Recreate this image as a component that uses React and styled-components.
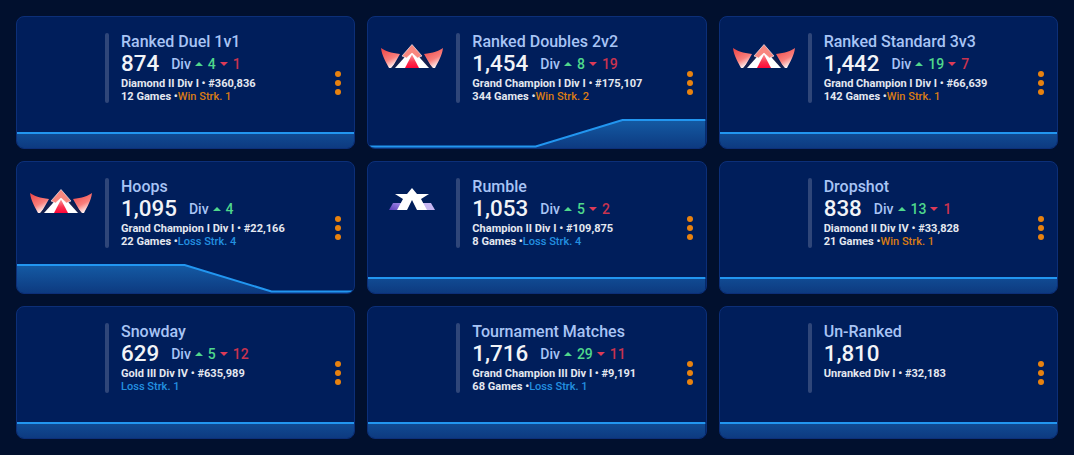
import React from "react";
import styled, { createGlobalStyle } from "styled-components";

const Global = createGlobalStyle`
  html, body { margin: 0; padding: 0; }
  body { background: #01102e; font-family: Roboto, "Liberation Sans", sans-serif; }
`;
const Page = styled.div`
  width: 1074px; height: 455px; box-sizing: border-box; overflow: hidden;
  padding: 16px 16px 0;
  background: #01102e;
  display: grid; grid-template-columns: repeat(3, 1fr); grid-auto-rows: 133px;
  column-gap: 12px; row-gap: 12px;
`;
const Card = styled.div`
  position: relative; box-sizing: border-box; overflow: hidden;
  background: #001e5b; border: 1px solid #0c2f78; border-radius: 8px;
  display: flex; align-items: flex-start;
  padding: 16px 0 0 88px;
`;
const Rank = styled.div`
  position: absolute; left: 9px; top: 24px; width: 70px; height: 30px;
`;
const Divider = styled.div`
  width: 4px; height: 70px; border-radius: 2px; background: #2f4679; flex: none;
`;
const Info = styled.div`
  margin-left: 12px; display: flex; flex-direction: column; flex: 1;
`;
const Title = styled.div`
  font-size: 16px; font-weight: 500; line-height: 18px; color: #a8c4f5;
`;
const StatRow = styled.div`
  display: flex; align-items: center; height: 28px; margin-top: -2px;
`;
const Mmr = styled.div`
  font-size: 22.4px; font-weight: 500; line-height: 28px; color: #f1f3f7;
`;
const Div = styled.span`
  font-size: 14px; font-weight: 500; color: #a8c4f5; margin-left: 12px; position: relative; top: 1px;
`;
const Arrow = styled.span`
  width: 0; height: 0; margin-left: 4px; margin-right: 5px; position: relative; top: 1px;
  border-left: 4px solid transparent; border-right: 4px solid transparent;
  ${p => p.$up ? "border-bottom: 4px solid #4fd88c;" : "border-top: 4px solid #dd3a57;"}
`;
const Delta = styled.span`
  font-size: 14px; font-weight: 500; position: relative; top: 1px;
  color: ${p => p.$up ? "#4fd88c" : "#c9334f"};
`;
const Sub = styled.div`
  font-size: 11.05px; font-weight: 700; line-height: 13px; color: #e4e8f0; white-space: pre;
`;
const Streak = styled.span`
  font-weight: 500; color: ${p => p.$win ? "#d97c14" : "#2390e0"};
`;
const Menu = styled.div`
  position: absolute; right: 13px; top: 54px;
  display: flex; flex-direction: column; gap: 3px;
`;
const Dot = styled.span`
  width: 6px; height: 6px; border-radius: 50%; background: #e8820f;
`;
const ChartSvg = styled.svg`
  position: absolute; left: 0; bottom: 0; width: 100%; height: 131px; display: block;
`;

const GC = ({ id }) => (
  <svg viewBox="0 0 70 30" width="70" height="30">
    <defs>
      <linearGradient id={`wing${id}`} x1="0.1" y1="0" x2="0.6" y2="1">
        <stop offset="0" stopColor="#ee4545" />
        <stop offset="0.6" stopColor="#f97f7c" />
        <stop offset="1" stopColor="#ffffff" />
      </linearGradient>
      <linearGradient id={`gem${id}`} x1="0" y1="0" x2="0" y2="1">
        <stop offset="0" stopColor="#fb9a98" />
        <stop offset="0.55" stopColor="#f8324f" />
        <stop offset="1" stopColor="#ff0638" />
      </linearGradient>
    </defs>
    <path d="M4 7 C8 10 14 12 23 13 L15 27 H12 C9 21 5 15 4 7Z" fill={`url(#wing${id})`} />
    <path d="M66 7 C62 10 56 12 47 13 L55 27 H58 C61 21 65 15 66 7Z" fill={`url(#wing${id})`} />
    <path d="M35 4 L56 27 H14Z" fill="#14204e" />
    <path d="M35 8 L52 27 H18Z" fill="#fff" />
    <path d="M35 3.5 L45 15 L40.5 17 L35 12 L29.5 17 L25 15Z" fill="#f8877f" stroke="#fff" strokeWidth="0.6" />
    <path d="M35 13.5 L42 27 H28Z" fill={`url(#gem${id})`} />
  </svg>
);

const Champ = ({ id }) => (
  <svg viewBox="0 0 70 30" width="70" height="30">
    <defs>
      <linearGradient id={`purp${id}`} x1="0" y1="1" x2="1" y2="0">
        <stop offset="0" stopColor="#5b3fb8" />
        <stop offset="1" stopColor="#a88fec" />
      </linearGradient>
    </defs>
    <path d="M12 24 L16 17 H26 L21 24Z" fill={`url(#purp${id})`} />
    <path d="M44 17 H54 L58 24 H49Z" fill="#c6b6f2" />
    <path d="M35 2 L40 8 H52 L44 13 L50 24 H40 L35 14 L30 24 H20 L26 13 L18 8 H30Z" fill="#fff" />
  </svg>
);

const flat = { line: "M0 116 H338", area: "M0 116 H338 V131 H0Z" };
const up = { line: "M0 129.5 H168 L255 103 H338", area: "M0 129.5 H168 L255 103 H338 V131 H0Z" };
const down = { line: "M0 103 H168 L255 129.5 H338", area: "M0 103 H168 L255 129.5 H338 V131 H0Z" };

const Chart = ({ d, id }) => (
  <ChartSvg viewBox="0 0 338 131" preserveAspectRatio="none">
    <defs>
      <linearGradient id={id} x1="0" y1="100" x2="0" y2="131" gradientUnits="userSpaceOnUse">
        <stop offset="0" stopColor="#155ea8" />
        <stop offset="1" stopColor="#0d3a80" />
      </linearGradient>
    </defs>
    <path d={d.area} fill={`url(#${id})`} />
    <path d={d.line} fill="none" stroke="#2296f0" strokeWidth="2" />
  </ChartSvg>
);

const cards = [
  { t: "Ranked Duel 1v1", m: "874", u: 4, dn: 1, s: "Diamond II Div I • #360,836", g: "12 Games •", k: "Win Strk. 1", w: true, c: flat },
  { t: "Ranked Doubles 2v2", m: "1,454", u: 8, dn: 19, s: "Grand Champion I Div I • #175,107", g: "344 Games •", k: "Win Strk. 2", w: true, c: up, r: "gc" },
  { t: "Ranked Standard 3v3", m: "1,442", u: 19, dn: 7, s: "Grand Champion I Div I • #66,639", g: "142 Games •", k: "Win Strk. 1", w: true, c: flat, r: "gc" },
  { t: "Hoops", m: "1,095", u: 4, s: "Grand Champion I Div I • #22,166", g: "22 Games •", k: "Loss Strk. 4", c: down, r: "gc" },
  { t: "Rumble", m: "1,053", u: 5, dn: 2, s: "Champion II Div I • #109,875", g: "8 Games •", k: "Loss Strk. 4", c: flat, r: "ch" },
  { t: "Dropshot", m: "838", u: 13, dn: 1, s: "Diamond II Div IV • #33,828", g: "21 Games •", k: "Win Strk. 1", w: true, c: flat },
  { t: "Snowday", m: "629", u: 5, dn: 12, s: "Gold III Div IV • #635,989", g: "", k: "Loss Strk. 1", c: flat },
  { t: "Tournament Matches", m: "1,716", u: 29, dn: 11, s: "Grand Champion III Div I • #9,191", g: "68 Games •", k: "Loss Strk. 1", c: flat },
  { t: "Un-Ranked", m: "1,810", s: "Unranked Div I • #32,183", c: flat },
];

export default function App() {
  return (
    <Page>
      <Global />
      {cards.map((c, i) => (
        <Card key={c.t}>
          <Chart d={c.c} id={`fill${i}`} />
          {c.r && <Rank>{c.r === "gc" ? <GC id={i} /> : <Champ id={i} />}</Rank>}
          <Divider />
          <Info>
            <Title>{c.t}</Title>
            <StatRow>
              <Mmr>{c.m}</Mmr>
              {c.u != null && <Div>Div</Div>}
              {c.u != null && <Arrow $up />}
              {c.u != null && <Delta $up>{c.u}</Delta>}
              {c.dn != null && <Arrow />}
              {c.dn != null && <Delta>{c.dn}</Delta>}
            </StatRow>
            <Sub>{c.s}</Sub>
            {c.k && <Sub>{c.g}<Streak $win={c.w}>{c.k}</Streak></Sub>}
          </Info>
          <Menu><Dot /><Dot /><Dot /></Menu>
        </Card>
      ))}
    </Page>
  );
}
